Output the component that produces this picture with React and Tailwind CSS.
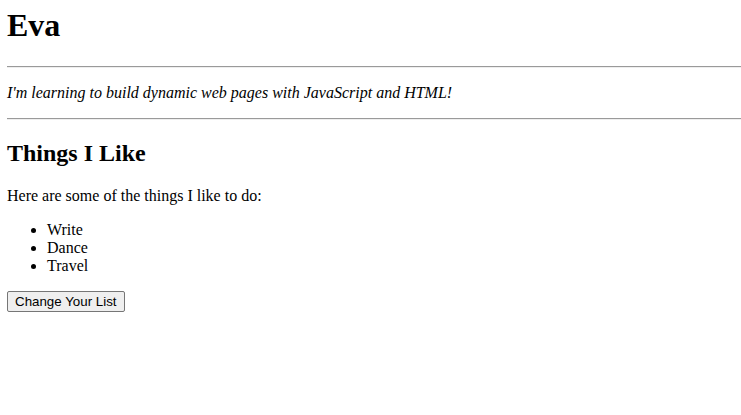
import React, { useState } from 'react';

const Rule = () => <div className="h-0 border-t border-b border-t-[#9a9a9a] border-b-[#eeeeee]" />;

export default function App() {
  const [items, setItems] = useState(['Write', 'Dance', 'Travel']);

  return (
    <div className="min-h-screen bg-white pl-[7px] pt-[7px] text-black font-['Liberation_Serif','Times_New_Roman',serif] text-[16px] leading-[normal]">
      <h1 className="text-[32px] font-bold leading-[normal] mb-[21.5px]">Eva</h1>
      <Rule />
      <p className="italic my-[16px]">I'm learning to build dynamic web pages with JavaScript and HTML!</p>
      <Rule />
      <h2 className="text-[24px] font-bold leading-[normal] mt-[20px] mb-[20px]">Things I Like</h2>
      <p>Here are some of the things I like to do:</p>
      <ul className="list-disc pl-[40px] my-[16px]">
        {items.map(item => <li key={item}>{item}</li>)}
      </ul>
      <button
        onClick={() => setItems([...items].reverse())}
        className="font-['Liberation_Sans',Arial,sans-serif] text-[13.33px] leading-[normal] px-[7px] py-[2px] bg-[#efefef] border border-[#767676] rounded-[2px]"
      >
        Change Your List
      </button>
    </div>
  );
}
